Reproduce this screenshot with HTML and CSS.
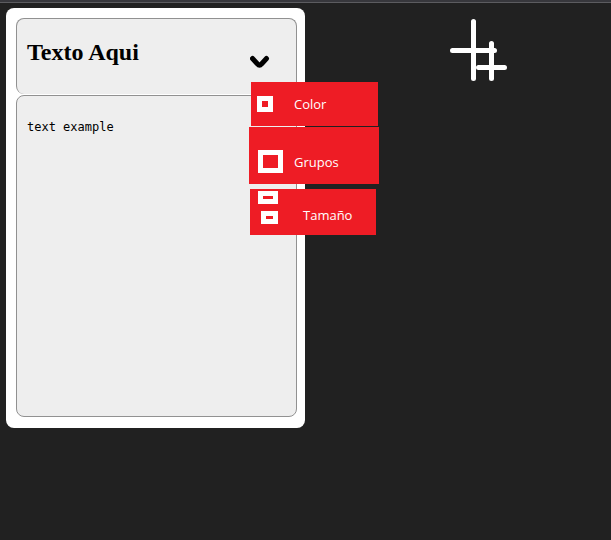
FILE: index.html
```html
<!DOCTYPE html>
<html lang="es">
<head>
<meta charset="utf-8">
<title>Texto Aqui</title>
<link rel="stylesheet" href="styles.css">
</head>
<body>
<main class="board">
  <section class="note">
    <header class="note-header">
      <h2 class="note-title" id="note-title">Texto Aqui</h2>
      <button class="toggle" type="button" aria-label="Opciones" aria-expanded="true">
        <svg width="20" height="16" viewBox="0 0 20 16"><path d="M2.500 4.500L7.500 10Q9.500 12.500 11.500 10L16.500 4.500" /></svg>
      </button>
      <div class="menu">
        <button class="item item-color" type="button">
          <svg width="16" height="16" viewBox="0 0 16 16"><path fill-rule="evenodd" d="M0 0H16V16H0ZM5 5V11H11V5Z"/></svg>
          <span>Color</span>
        </button>
        <button class="item item-group" type="button">
          <svg width="25" height="23" viewBox="0 0 25 23"><path fill-rule="evenodd" d="M0 0H25V23H0ZM5 5V18H20V5Z"/></svg>
          <span>Grupos</span>
        </button>
        <button class="item item-size" type="button">
          <svg width="20" height="33" viewBox="0 0 20 33"><path fill-rule="evenodd" d="M0 0H20V13H0ZM5 5V8H15V5ZM3 20H20V33H3ZM8 25V28H15V25Z"/></svg>
          <span>Tamaño</span>
        </button>
      </div>
    </header>
    <textarea class="note-body" aria-labelledby="note-title" spellcheck="false">text example</textarea>
  </section>
  <button class="grid-button" type="button" aria-label="Cuadrícula">
    <svg width="58" height="63" viewBox="0 0 58 63"><path d="M23.500 2.500V59.500M2.500 31.500H44.500M41.500 24.500V59.500M28.500 48.500H54.500"/></svg>
  </button>
</main>
</body>
</html>
```
FILE: styles.css
```css
* {
  box-sizing: border-box;
}

body {
  margin: 0;
  min-height: 100vh;
  background: #212121;
  border-top: 2px solid #37373c;
}

button {
  border: 0;
  padding: 0;
  background: none;
  cursor: pointer;
}

svg {
  display: block;
}

.board {
  display: flex;
  align-items: flex-start;
  justify-content: space-between;
  padding: 5px 103px 0 6px;
  border-top: 1px solid #5c5c60;
}

.note {
  flex: 0 1 299px;
  padding: 10px 8px 11px 10px;
  background: #fff;
  border-radius: 8px;
}

.note-header {
  position: relative;
  display: flex;
  align-items: flex-start;
  justify-content: space-between;
  height: 76px;
  margin-bottom: 1px;
  padding: 20px 26px 0 10px;
  background: #eee;
  border: 1px solid #919191;
  border-bottom: 0;
  border-radius: 8px;
}

.note-title {
  margin: 0;
  font: bold 24px/26px "Liberation Serif", serif;
  color: #000;
}

.toggle {
  margin-top: 15px;
}

.toggle path {
  fill: none;
  stroke: #000;
  stroke-width: 5;
  stroke-linecap: round;
  stroke-linejoin: round;
}

.note-body {
  display: block;
  width: 100%;
  height: 322px;
  padding: 24px 10px;
  resize: none;
  outline: 0;
  background: #eee;
  border: 1px solid #919191;
  border-radius: 8px;
  color: #000;
  font: 12px/14px "DejaVu Sans Mono", monospace;
}

.menu {
  position: absolute;
  top: 63px;
  left: 232px;
  z-index: 1;
}

.item {
  display: flex;
  align-items: center;
  background: #ee1c25;
  color: #fff;
  font: 13px/18px "Open Sans", sans-serif;
}

.item path {
  fill: #fff;
}

.item-color {
  width: 127px;
  height: 44px;
  margin: 0 0 1px 2px;
  padding-left: 6px;
  gap: 21px;
}

.item-group {
  width: 130px;
  height: 57px;
  margin-bottom: 5px;
  padding: 12px 0 0 9px;
  gap: 11px;
}

.item-size {
  width: 126px;
  height: 46px;
  margin-left: 1px;
  padding: 2px 0 0 8px;
  align-items: flex-start;
  gap: 25px;
}

.item-size span {
  padding-top: 15px;
}

.grid-button {
  margin-top: 11px;
}

.grid-button path {
  fill: none;
  stroke: #fff;
  stroke-width: 5;
  stroke-linecap: round;
}
```
